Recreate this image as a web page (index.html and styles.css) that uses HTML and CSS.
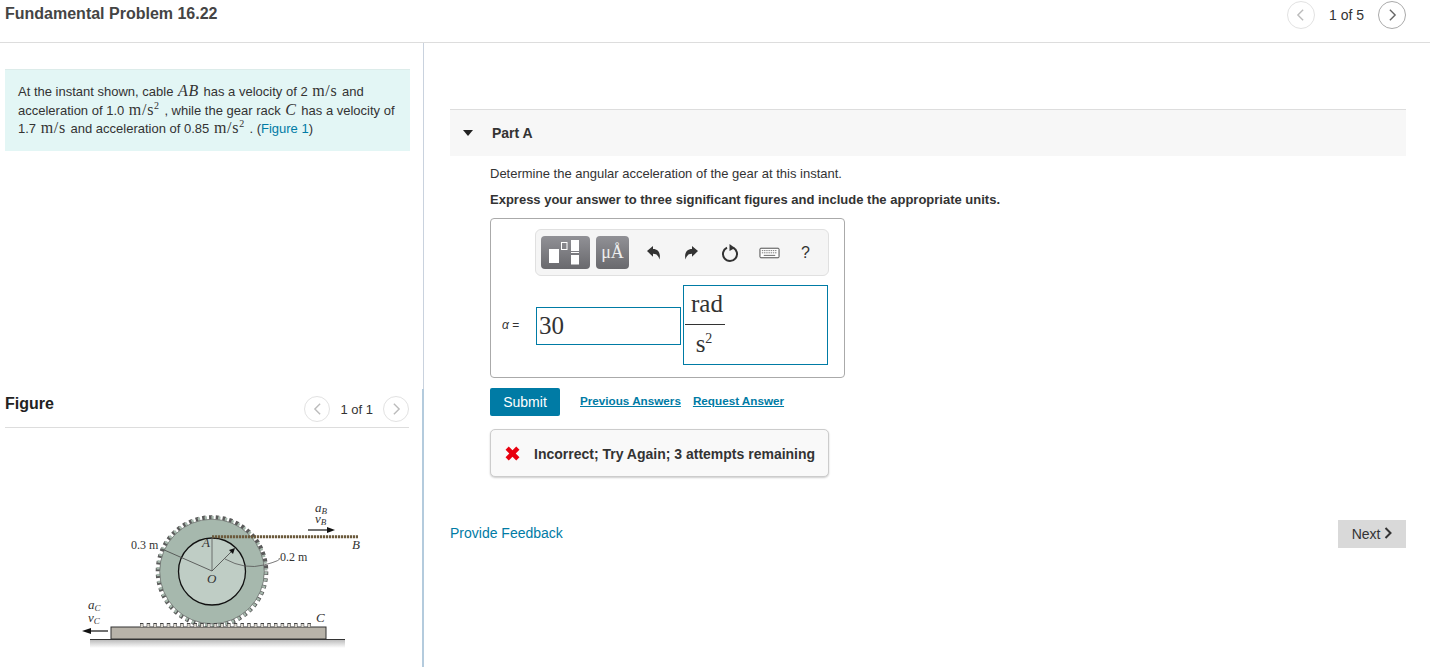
FILE: index.html
```html
<!DOCTYPE html>
<html lang="en">
<head>
  <meta charset="UTF-8" />
  <title>Fundamental Problem 16.22</title>
  <link rel="stylesheet" href="styles.css">
</head>
<body>
  <header class="top-bar">
    <h1>Fundamental Problem 16.22</h1>
    <div class="pager">
      <span class="round-btn off"><svg viewBox="0 0 10 16"><path d="M8 2 2 8l6 6"/></svg></span>
      <span class="pager-text">1 of 5</span>
      <span class="round-btn"><svg viewBox="0 0 10 16"><path d="m2 2 6 6-6 6"/></svg></span>
    </div>
  </header>

  <div class="columns">
    <!-- left side: problem text and figure -->
    <aside class="left">
      <div class="problem">
        At the instant shown, cable <i class="m">AB</i> has a velocity of 2 <span class="m">m/s</span> and
        acceleration of 1.0 <span class="m">m/s<sup>2</sup></span> , while the gear rack <i class="m">C</i> has a velocity of
        1.7 <span class="m">m/s</span> and acceleration of 0.85 <span class="m">m/s<sup>2</sup></span> . (<a href="#">Figure 1</a>)
      </div>

      <div class="figure-head">
        <h2>Figure</h2>
        <div class="pager">
          <span class="round-btn off"><svg viewBox="0 0 10 16"><path d="M8 2 2 8l6 6"/></svg></span>
          <span class="pager-text">1 of 1</span>
          <span class="round-btn off"><svg viewBox="0 0 10 16"><path d="m2 2 6 6-6 6"/></svg></span>
        </div>
      </div>

      <svg class="gear" viewBox="0 0 320 177" width="320" height="177">
        <defs>
          <linearGradient id="floor" x1="0" y1="0" x2="0" y2="1">
            <stop offset="0" stop-color="#bdbdbd"/>
            <stop offset="1" stop-color="#fff"/>
          </linearGradient>
        </defs>
        <rect x="30" y="150" width="255" height="8" fill="url(#floor)"/>
        <!-- gear teeth: dark dashes with a green dash on top -->
        <circle cx="152" cy="81.500" r="54.200" fill="none" stroke="#5a5a5a" stroke-width="4.200" stroke-dasharray="3.400 3.410"/>
        <circle cx="152" cy="81.500" r="53.800" fill="none" stroke="#a6b8ad" stroke-width="3.400" stroke-dasharray="2.300 4.510" stroke-dashoffset="-0.550"/>
        <circle cx="152" cy="81.500" r="52.300" fill="#a6b8ad" stroke="#555" stroke-width="0.600"/>
        <circle cx="152" cy="81.500" r="33.500" fill="#bfcdc5" stroke="#111" stroke-width="1.300"/>
        <rect x="51" y="137" width="215" height="12" fill="#b8b3a9" stroke="#333" stroke-width="1"/>
        <line x1="80" y1="135" x2="252" y2="135" stroke="#444" stroke-width="4" stroke-dasharray="3.400 3.300"/>
        <line x1="80.500" y1="135.500" x2="252" y2="135.500" stroke="#d8d4cc" stroke-width="3.200" stroke-dasharray="2.400 4.300"/>
        <line x1="30" y1="149.500" x2="285" y2="149.500" stroke="#333" stroke-width="1"/>
        <line x1="152" y1="46.800" x2="298" y2="46.800" stroke="#6b5a3c" stroke-width="3" stroke-dasharray="2.200 .8"/>
        <line x1="152" y1="81" x2="152" y2="47" stroke="#555" stroke-width="0.800"/>
        <line x1="152" y1="81" x2="173" y2="60" stroke="#444" stroke-width="0.800"/>
        <path d="m175 58-6 2 4 4z" fill="#111"/>
        <line x1="152" y1="81" x2="102" y2="59" stroke="#444" stroke-width="0.800"/>
        <path d="M165 69q20 11 39 6t15-7" fill="none" stroke="#555" stroke-width="0.800"/>
        <path d="M248 40h20" stroke="#111" stroke-width="1.200"/><path d="m275 40-8-3v6z" fill="#111"/>
        <path d="M48 141H30" stroke="#111" stroke-width="1.200"/><path d="m22 141 9-3v6z" fill="#111"/>
        <g class="fig-text">
          <text x="71" y="59">0.3 m</text>
          <text x="220" y="71">0.2 m</text>
          <text class="it" x="142" y="57">A</text>
          <text class="it" x="147" y="93">O</text>
          <text class="it" x="292" y="59">B</text>
          <text class="it" x="256" y="132">C</text>
          <text class="it" x="255" y="22">a<tspan class="sub" dy="2">B</tspan></text>
          <text class="it" x="255" y="33">v<tspan class="sub" dy="2">B</tspan></text>
          <text class="it" x="28" y="119">a<tspan class="sub" dy="2">C</tspan></text>
          <text class="it" x="28" y="132">v<tspan class="sub" dy="2">C</tspan></text>
        </g>
      </svg>
    </aside>

    <main class="right">
      <div class="part-bar"><span class="caret"></span><strong>Part A</strong></div>

      <section class="part-body">
        <p class="ask">Determine the angular acceleration of the gear at this instant.</p>
        <p class="ask-bold">Express your answer to three significant figures and include the appropriate units.</p>

        <div class="answer-box">
          <div class="toolbar">
            <span class="tool-btn wide">
              <svg viewBox="0 0 49 33" width="49" height="33">
                <rect x="8" y="13" width="10" height="14" fill="#fff"/>
                <rect x="20.500" y="6.500" width="5.500" height="7" fill="none" stroke="#fff"/>
                <rect x="30" y="4" width="8" height="11" fill="#fff"/>
                <rect x="30" y="16" width="8" height="1" fill="#fff"/>
                <rect x="30" y="19" width="8" height="9.500" fill="#fff"/>
              </svg>
            </span>
            <span class="tool-btn unit">μÅ</span>
            <svg class="ico first" viewBox="0 0 16 16" width="16" height="16"><path d="M1 6 7 1v3c5 0 8 4 6.500 10.500C12.500 11 11 8.800 7 8.800v3z" fill="#333"/></svg>
            <svg class="ico" viewBox="0 0 16 16" width="16" height="16"><path d="M15 6 9 1v3C4 4 1 8 2.500 14.500 3.500 11 5 8.800 9 8.800v3z" fill="#333"/></svg>
            <svg class="ico refresh" viewBox="0 0 18 18" width="18" height="18"><path d="M12 3.600A7 7 0 1 1 6 3.600" fill="none" stroke="#333" stroke-width="2"/><path d="m8.500 0 5.500 4-5.500 3z" fill="#333"/></svg>
            <svg class="ico kbd" viewBox="0 0 22 12" width="21" height="12"><rect x="1" y="1" width="20" height="10" rx="1" fill="#fff" stroke="#444"/><path d="M3 3.500h16M3 5.800h16" stroke="#777" stroke-dasharray="1.500 .8"/><path d="M5 8.500h12" stroke="#666"/></svg>
            <span class="help">?</span>
          </div>

          <div class="entry">
            <span class="alpha"><i>α</i> =</span>
            <div class="field value">30</div>
            <div class="field units">
              <div class="frac">
                <span class="num">rad</span>
                <span class="den">s<sup>2</sup></span>
              </div>
            </div>
          </div>
        </div>

        <div class="actions">
          <button class="submit">Submit</button>
          <a class="act-link first-link" href="#">Previous Answers</a>
          <a class="act-link" href="#">Request Answer</a>
        </div>

        <div class="feedback">
          <svg viewBox="0 0 14 14" width="15" height="15"><path d="M3.500 .5 7 4l3.500-3.500 3 3L10 7l3.500 3.500-3 3L7 10l-3.500 3.500-3-3L4 7 .5 3.500z" fill="#e8000f"/></svg>
          <strong>Incorrect; Try Again; 3 attempts remaining</strong>
        </div>
      </section>

      <div class="bottom-row">
        <a class="provide" href="#">Provide Feedback</a>
        <button class="next">Next <svg viewBox="0 0 8 12" width="8" height="12"><path d="m1.500 1 5 5-5 5" fill="none" stroke="#333" stroke-width="2"/></svg></button>
      </div>
    </main>
  </div>
</body>
</html>
```

FILE: styles.css
```css
html, body {
  height: 100%;
}
body {
  margin: 0;
  overflow: hidden;
  background: #fff;
  color: #333;
  font-family: "Liberation Sans", Arial, sans-serif;
  font-size: 13px;
}
a {
  color: #007ba5;
  text-decoration: none;
}
.top-bar {
  display: flex;
  justify-content: space-between;
  height: 42px;
  padding: 0 24px 0 5px;
  border-bottom: 1px solid #ddd;
}
.top-bar h1 {
  margin: 5px 0 0;
  color: #444;
  font-size: 16px;
  line-height: 17px;
}
.pager {
  display: flex;
  align-items: center;
  height: 28px;
  gap: 14px;
  font-size: 13px;
}
.top-bar .pager {
  margin-top: 1px;
  font-size: 14px;
}
.round-btn {
  display: flex;
  align-items: center;
  justify-content: center;
  box-sizing: border-box;
  width: 28px;
  height: 28px;
  border: 1px solid #aaa;
  border-radius: 50%;
}
.round-btn svg {
  width: 9px;
  height: 14px;
  fill: none;
  stroke: #666;
  stroke-width: 1.6;
}
.round-btn.off {
  border-color: #e2e2e2;
}
.round-btn.off svg {
  stroke: #bbb;
}
.columns {
  display: flex;
  height: 624px;
}
.left {
  position: relative;
  width: 423px;
  flex: none;
  border-right: 1px solid #c9d2de;
}
/* thicker blue part of the splitter, lies over the column edge */
.left::after {
  content: "";
  position: absolute;
  top: 346px;
  bottom: 0;
  right: -1px;
  width: 2px;
  background: #b4cbdd;
}
.problem {
  width: 381px;
  height: 56px;
  margin: 26px 0 0 5px;
  padding: 13px 11px 12px 13px;
  background: #e3f6f5;
  border-top: 1px solid #dcecea;
  line-height: 18.500px;
}
.m {
  margin: 0 1px;
  font-family: "Liberation Serif", serif;
  font-size: 16px;
  letter-spacing: 0.7px;
  line-height: 1;
}
.problem sup {
  font-size: 10px;
  line-height: 0;
}
.figure-head {
  display: flex;
  justify-content: space-between;
  align-items: flex-start;
  width: 404px;
  height: 37px;
  margin: 239px 0 0 5px;
  border-bottom: 1px solid #ddd;
}
.figure-head h2 {
  margin: 4px 0 0;
  color: #222;
  font-size: 16px;
  line-height: 20px;
}
.figure-head .pager {
  gap: 10px;
  margin-top: 5px;
}
.figure-head .round-btn {
  width: 26px;
  height: 26px;
}
.gear {
  display: block;
  margin: 62px 0 0 60px;
}
.fig-text text {
  font-family: "Liberation Serif", serif;
  font-size: 12px;
  fill: #333;
}
.fig-text .it {
  font-size: 13px;
  font-style: italic;
}
.fig-text .sub {
  font-size: 9px;
}
.right {
  flex: 1;
  padding: 66px 24px 0 26px;
}
.part-bar {
  display: flex;
  align-items: center;
  height: 46px;
  padding-left: 13px;
  background: #f7f7f7;
  border-top: 1px solid #ddd;
}
.part-bar strong {
  margin-left: 19px;
  font-size: 14px;
}
.caret {
  width: 0;
  height: 0;
  border-left: 5.500px solid transparent;
  border-right: 5.500px solid transparent;
  border-top: 6px solid #222;
}
.part-body {
  padding-left: 40px;
}
.ask {
  margin: 10px 0 0;
  font-size: 13px;
  line-height: 16px;
}
.ask-bold {
  margin: 10px 0 0;
  font-size: 13px;
  font-weight: bold;
  line-height: 16px;
}
.answer-box {
  width: 353px;
  height: 158px;
  margin-top: 10px;
  border: 1px solid #aaa;
  border-radius: 4px;
}
.toolbar {
  display: flex;
  align-items: center;
  width: 292px;
  height: 45px;
  margin: 10px 0 0 44px;
  background: #f5f5f5;
  border: 1px solid #e0e0e0;
  border-radius: 6px;
}
.tool-btn {
  display: flex;
  align-items: center;
  justify-content: center;
  height: 33px;
  margin-left: 5px;
  border-radius: 4px;
  background: linear-gradient(#919196, #69696d);
}
.tool-btn.wide {
  width: 49px;
}
.tool-btn.unit {
  width: 33px;
  margin-left: 6px;
  color: #eee;
  font-family: "Liberation Serif", serif;
  font-size: 18px;
}
.ico {
  margin-left: 21px;
}
.ico.first {
  margin-left: 17px;
}
.ico.refresh {
  margin-left: 22px;
}
.ico.kbd {
  margin-left: 20px;
}
.help {
  margin-left: 21px;
  font-size: 16px;
}
.entry {
  display: flex;
  align-items: center;
  margin-top: 9px;
}
.alpha {
  box-sizing: border-box;
  width: 45px;
  padding-left: 11px;
  font-size: 12px;
}
.field {
  box-sizing: border-box;
  border: 1px solid #007ba5;
  font-family: "Liberation Serif", serif;
}
.value {
  width: 145px;
  height: 38px;
  margin-top: 2px;
  padding-left: 2px;
  font-size: 25px;
  line-height: 36px;
}
.units {
  width: 145px;
  height: 80px;
  margin-left: 2px;
}
.frac {
  display: flex;
  flex-direction: column;
  align-items: center;
  width: 40px;
  margin-left: 1px;
  font-size: 25px;
}
.num {
  display: block;
  box-sizing: border-box;
  width: 100%;
  height: 39px;
  padding-left: 4px;
  border-bottom: 1px solid #333;
  line-height: 36px;
  text-align: center;
}
.den {
  margin-right: 2px;
  line-height: 38px;
}
.den sup {
  font-size: 14px;
  line-height: 0;
}
.actions {
  display: flex;
  align-items: center;
  margin-top: 10px;
}
.submit {
  width: 70px;
  height: 28px;
  padding: 0;
  border: 0;
  border-radius: 2px;
  background: #007ba5;
  color: #fff;
  font-family: inherit;
  font-size: 14px;
}
.act-link {
  margin-bottom: 4px;
  margin-left: 12px;
  font-size: 11.700px;
  font-weight: bold;
  text-decoration: underline;
}
.first-link {
  margin-left: 20px;
}
.feedback {
  display: flex;
  align-items: center;
  gap: 14px;
  box-sizing: border-box;
  width: 339px;
  height: 48px;
  margin-top: 13px;
  padding: 1px 0 0 14px;
  background: #f9f9f9;
  border: 1px solid #ccc;
  border-radius: 5px;
  box-shadow: 0 1px 2px rgba(0,0,0,0.2);
  font-size: 14px;
}
.bottom-row {
  display: flex;
  justify-content: space-between;
  align-items: center;
  margin-top: 43px;
}
.provide {
  margin-bottom: 2px;
  font-size: 14px;
}
.next {
  width: 68px;
  height: 28px;
  padding: 0;
  border: 0;
  background: #d9d9d9;
  color: #333;
  font-family: inherit;
  font-size: 14px;
}
```
